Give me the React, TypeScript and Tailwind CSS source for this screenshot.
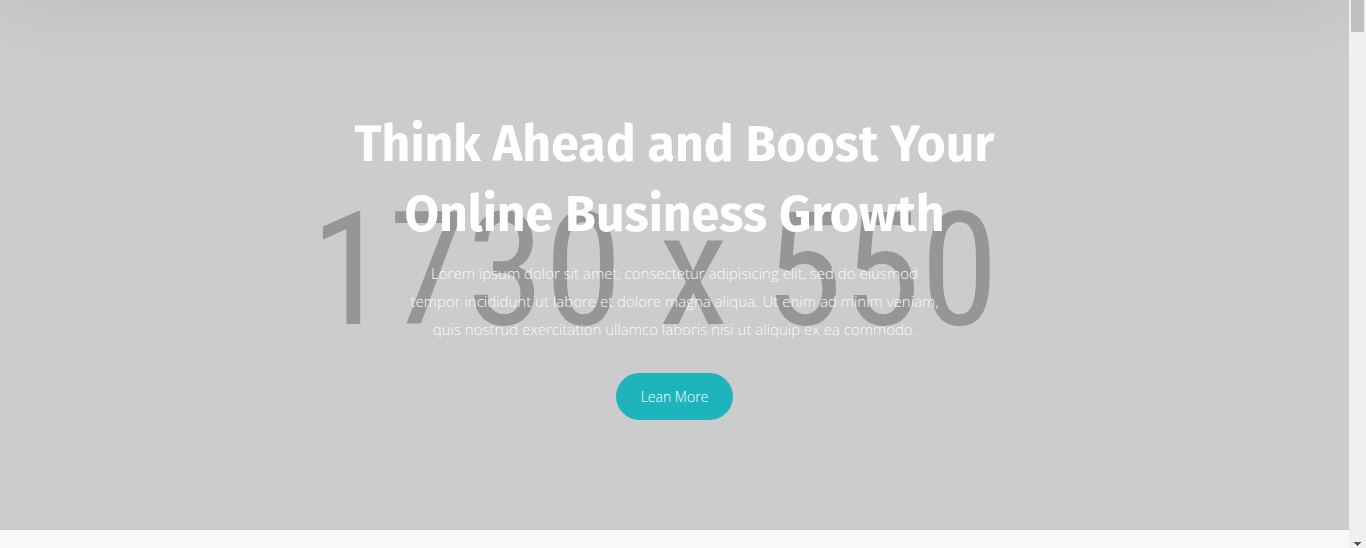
function Scrollbar() {
  return (
    <div aria-hidden="true" className="flex w-[17px] shrink-0 flex-col items-center justify-between bg-[#f0f0f0]">
      <div className="h-8 w-[13px] bg-[#c1c1c1]" />
      <svg width="7" height="4" viewBox="0 0 7 4" shapeRendering="crispEdges" className="mb-0.5" fill="#505050">
        <path d="M0 0h7v1H6v1H5v1H4v1H3V3H2V2H1V1H0z" />
      </svg>
    </div>
  );
}

function Hero() {
  return (
    <section className="relative overflow-hidden bg-[#cccccc] py-[109px] text-center">
      <div className="absolute inset-x-0 -top-24 h-24 shadow-[0_0_80px_rgba(0,0,0,0.09)]" />
      <div
        aria-hidden="true"
        className="absolute inset-x-0 top-[170px] pr-10 text-center font-['Roboto_Condensed','Archivo_Narrow','Liberation_Sans',sans-serif] text-[158px] leading-[200px] whitespace-nowrap text-[#969696]"
      >
        1730 x 550
      </div>
      <div className="relative mx-auto flex max-w-[730px] flex-col items-center">
        <h1 className="font-['Fira_Sans','Noto_Sans',sans-serif] text-[50px] leading-[70px] font-bold text-white">
          Think Ahead and Boost Your
          <br />
          Online Business Growth
        </h1>
        <p className="mt-[10px] max-w-[540px] font-['Open_Sans',sans-serif] text-[15px] leading-7 font-light text-[#f9f9f9]">
          Lorem ipsum dolor sit amet, consectetur adipisicing elit, sed do eiusmod tempor incididunt ut labore et
          dolore magna aliqua. Ut enim ad minim veniam, quis nostrud exercitation ullamco laboris nisi ut aliquip ex
          ea commodo.
        </p>
        <a
          href="#"
          className="mt-[30px] mb-px rounded-full bg-[#1eb4bc] px-[25px] py-3 font-['Open_Sans',sans-serif] text-sm leading-[23px] font-light text-white"
        >
          Lean More
        </a>
      </div>
    </section>
  );
}

export default function App() {
  return (
    <div className="flex min-h-screen bg-[#f9f9f9]">
      <main className="min-w-0 flex-1">
        <Hero />
      </main>
      <Scrollbar />
    </div>
  );
}
